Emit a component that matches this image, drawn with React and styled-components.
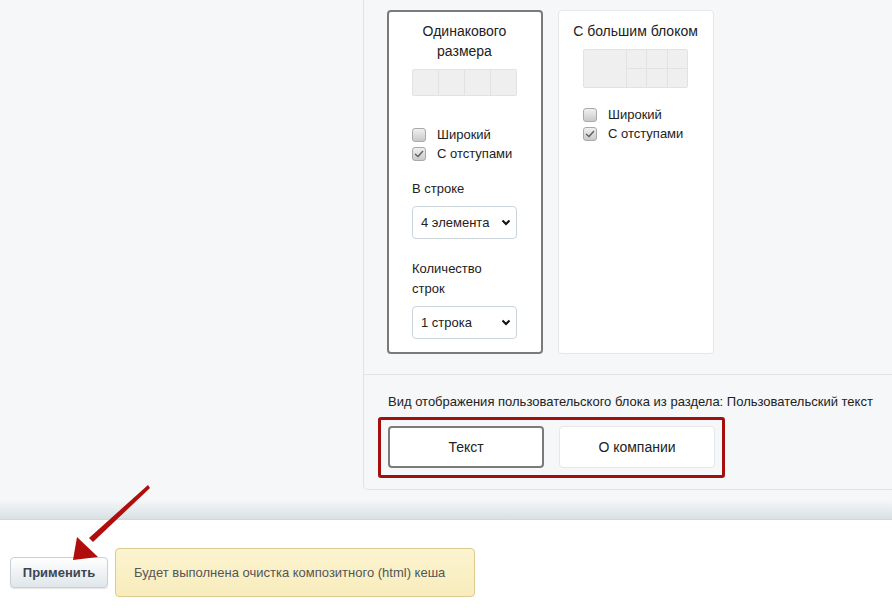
import React from "react";
import styled, { createGlobalStyle } from "styled-components";

const GlobalStyle = createGlobalStyle`
  body {
    margin: 0;
    background: #fff;
    font-family: "Liberation Sans", Arial, sans-serif;
    color: #222;
  }
`;

const Page = styled.div`
  position: relative;
  width: 892px;
  height: 610px;
  overflow: hidden;
`;

const Workspace = styled.div`
  background: #f5f7f8;
`;

const PanelArea = styled.div`
  padding-left: 363px;
`;

const Panel = styled.div`
  border-left: 1px solid #dfe4e7;
  border-bottom: 1px solid #dfe4e7;
  border-bottom-left-radius: 5px;
`;

const LayoutSection = styled.div`
  display: flex;
  align-items: stretch;
  gap: 15px;
  padding: 10px 0 20px 23px;
  border-bottom: 1px solid #dfe4e7;
`;

const Card = styled.div`
  box-sizing: border-box;
  width: 156px;
  background: #fff;
  border-radius: 4px;
  border: ${(p) => (p.$active ? "2px solid #7b7b7b" : "1px solid #e4e8ea")};
  padding: ${(p) => (p.$active ? "9px 24px 13px 23px" : "10px 25px 14px 24px")};
`;

const CardTitle = styled.div`
  font-size: 14px;
  line-height: 20px;
  text-align: center;
  white-space: nowrap;
  margin: 0 -20px;
  color: #222;
`;

const Preview = styled.div`
  height: 56px;
  margin-top: 8px;
`;

const Grid = styled.div`
  display: grid;
  width: 105px;
  height: ${(p) => p.$h}px;
  grid-template-columns: ${(p) => p.$cols};
  grid-template-rows: ${(p) => p.$rows};
  background: #e2e2e2;
  border: 1px solid #e2e2e2;
  box-sizing: border-box;
  gap: 1px;
  border-radius: 2px;
`;

const Cell = styled.div`
  background: #efefef;
  grid-row: ${(p) => p.$span || "auto"};
`;

const CheckRow = styled.label`
  display: flex;
  align-items: center;
  gap: 11px;
  height: 19px;
  font-size: 13px;
  color: #222;
`;

const Box = styled.span`
  box-sizing: border-box;
  width: 14px;
  height: 14px;
  border: 1px solid #a9a9a9;
  border-radius: 3px;
  background: linear-gradient(#f0f0f0, #c9c9c9);
  display: flex;
  align-items: center;
  justify-content: center;
`;

const FieldLabel = styled.div`
  font-size: 13px;
  line-height: 20px;
  margin-top: ${(p) => p.$top}px;
  margin-bottom: 7px;
`;

const SelectWrap = styled.div`
  position: relative;
  width: 105px;
`;

const Select = styled.select`
  appearance: none;
  box-sizing: border-box;
  width: 105px;
  height: 33px;
  padding: 0 0 0 8px;
  border: 1px solid #cdd4d9;
  border-radius: 4px;
  background: #fff;
  font-family: inherit;
  font-size: 13px;
  color: #222;
`;

const Chevron = styled.svg`
  position: absolute;
  right: 6px;
  top: 13px;
  pointer-events: none;
`;

const ViewSection = styled.div`
  padding: 19px 0 11px 14px;
`;

const Caption = styled.div`
  font-size: 13px;
  line-height: 16px;
  margin: 0 0 7px 10px;
`;

const Highlight = styled.div`
  display: flex;
  width: fit-content;
  gap: 15px;
  padding: 6px 7px 7px 7px;
  border: 3px solid #a30e0e;
  border-radius: 3px;
`;

const ViewButton = styled.button`
  box-sizing: border-box;
  width: 156px;
  height: 42px;
  background: #fff;
  border-radius: 4px;
  border: ${(p) => (p.$active ? "2px solid #7b7b7b" : "1px solid #e4e8ea")};
  font-family: inherit;
  font-size: 14px;
  color: #222;
`;

const Shade = styled.div`
  height: 29px;
  background: linear-gradient(#f5f7f8 0, #f5f7f8 10px, #d9e0e4 100%);
  border-bottom: 1px solid #d2d9dd;
`;

const Footer = styled.div`
  display: flex;
  align-items: center;
  gap: 7px;
  padding: 28px 10px 0;
`;

const ApplyButton = styled.button`
  box-sizing: border-box;
  width: 98px;
  height: 31px;
  border: 1px solid #c9d1d6;
  border-radius: 4px;
  background: linear-gradient(#ffffff, #dfe6ea);
  box-shadow: 0 1px 1px rgba(0, 0, 0, 0.12);
  font-family: inherit;
  font-weight: bold;
  font-size: 13px;
  color: #3c4650;
`;

const Notice = styled.div`
  box-sizing: border-box;
  width: 360px;
  height: 49px;
  display: flex;
  align-items: center;
  padding-left: 18px;
  background: linear-gradient(#fcf4d0, #f8ecbc);
  border: 1px solid #dccb8e;
  border-radius: 4px;
  font-size: 13px;
  color: #555;
`;

const Arrow = styled.svg`
  position: absolute;
  left: 60px;
  top: 480px;
  pointer-events: none;
`;

const Check = () => (
  <svg width="10" height="8" viewBox="0 0 10 8">
    <path d="M1 4 L4 6.5 L9 1" fill="none" stroke="#5f5f5f" strokeWidth="1.4" />
  </svg>
);

const Checkbox = ({ checked, children }) => (
  <CheckRow>
    <Box>{checked && <Check />}</Box>
    {children}
  </CheckRow>
);

const Dropdown = ({ value }) => (
  <SelectWrap>
    <Select defaultValue={value}>
      <option>{value}</option>
    </Select>
    <Chevron width="10" height="7" viewBox="0 0 10 7">
      <path d="M1.5 1.5 L5 5 L8.5 1.5" fill="none" stroke="#111" strokeWidth="2" />
    </Chevron>
  </SelectWrap>
);

export default function App() {
  return (
    <Page>
      <GlobalStyle />
      <Workspace>
        <PanelArea>
          <Panel>
            <LayoutSection>
              <Card $active>
                <CardTitle>
                  Одинакового
                  <br />
                  размера
                </CardTitle>
                <Preview>
                  <Grid $h={27} $cols="repeat(4, 1fr)" $rows="1fr">
                    <Cell />
                    <Cell />
                    <Cell />
                    <Cell />
                  </Grid>
                </Preview>
                <Checkbox>Широкий</Checkbox>
                <Checkbox checked>С отступами</Checkbox>
                <FieldLabel $top={16}>В строке</FieldLabel>
                <Dropdown value="4 элемента" />
                <FieldLabel $top={20}>
                  Количество
                  <br />
                  строк
                </FieldLabel>
                <Dropdown value="1 строка" />
              </Card>
              <Card>
                <CardTitle>С большим блоком</CardTitle>
                <Preview>
                  <Grid $h={39} $cols="42px 1fr 1fr 1fr" $rows="1fr 1fr">
                    <Cell $span="1 / 3" />
                    <Cell />
                    <Cell />
                    <Cell />
                    <Cell />
                    <Cell />
                    <Cell />
                  </Grid>
                </Preview>
                <Checkbox>Широкий</Checkbox>
                <Checkbox checked>С отступами</Checkbox>
              </Card>
            </LayoutSection>
            <ViewSection>
              <Caption>
                Вид отображения пользовательского блока из раздела: Пользовательский текст
              </Caption>
              <Highlight>
                <ViewButton $active>Текст</ViewButton>
                <ViewButton>О компании</ViewButton>
              </Highlight>
            </ViewSection>
          </Panel>
        </PanelArea>
        <Shade />
      </Workspace>
      <Footer>
        <ApplyButton>Применить</ApplyButton>
        <Notice>Будет выполнена очистка композитного (html) кеша</Notice>
      </Footer>
      <Arrow width="100" height="90" viewBox="0 0 100 90">
        <path d="M88 5 L90 8 L33 62 L29 58 Z" fill="#b00d0d" />
        <path d="M13 80 L17 57 L38 77 Z" fill="#b00d0d" />
      </Arrow>
    </Page>
  );
}
